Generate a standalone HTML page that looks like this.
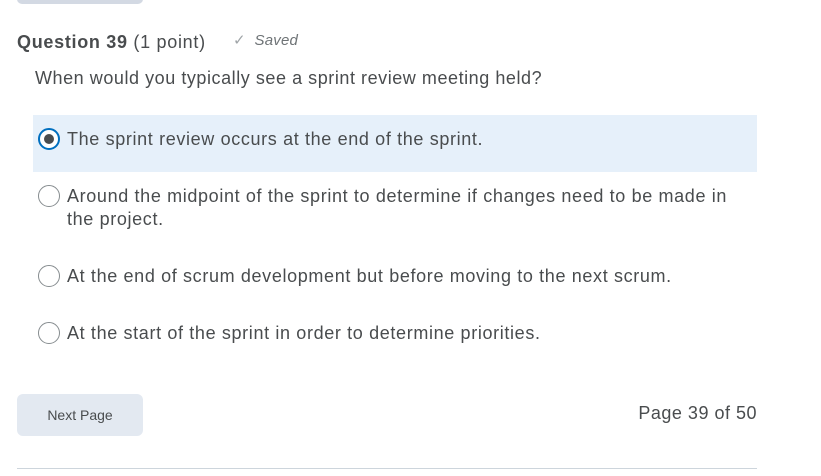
<!DOCTYPE html>
<html><head><style>
body{margin:0;width:821px;height:476px;background:#fff;font-family:"Liberation Sans",sans-serif;color:#494c4e;position:relative;overflow:hidden}
.a{position:absolute;white-space:nowrap}
.r{position:absolute;width:18px;height:18px;border:1px solid #868c8f;border-radius:50%;background:#fff;box-sizing:border-box}
.t{font-size:18px;line-height:23px;letter-spacing:0.64px}
</style></head><body>
<div class="a" style="left:17px;top:-6px;width:126px;height:10px;background:#d3d9e3;border-radius:5px"></div>
<div class="a" style="left:17px;top:30px;font-size:18px;line-height:24px;letter-spacing:0.7px"><b>Question 39</b> (1 point)</div>
<div class="a" style="left:233px;top:31px;font-size:15px;color:#6e7376;font-style:italic;letter-spacing:0.2px"><span style="color:#a0a5a8;font-style:normal;font-size:15px">✓</span>&nbsp; Saved</div>
<div class="a t" style="left:35px;top:67px;letter-spacing:0.55px">When would you typically see a sprint review meeting held?</div>
<div class="a" style="left:33px;top:115px;width:724px;height:57px;background:#e6f0fa"></div>
<div class="r" style="left:38px;top:128px;width:22px;height:22px;border:2px solid #006fbf"><div style="position:absolute;left:4px;top:4px;width:10px;height:10px;border-radius:50%;background:#494c4e"></div></div>
<div class="a t" style="left:67px;top:128px">The sprint review occurs at the end of the sprint.</div>
<div class="r" style="left:38px;top:185px;width:22px;height:22px"></div>
<div class="a t" style="left:67px;top:185px">Around the midpoint of the sprint to determine if changes need to be made in<br>the project.</div>
<div class="r" style="left:38px;top:265px;width:22px;height:22px"></div>
<div class="a t" style="left:67px;top:265px">At the end of scrum development but before moving to the next scrum.</div>
<div class="r" style="left:38px;top:322px;width:22px;height:22px"></div>
<div class="a t" style="left:67px;top:322px">At the start of the sprint in order to determine priorities.</div>
<div class="a" style="left:17px;top:394px;width:126px;height:42px;background:#e3e9f1;border-radius:6px;font-size:14px;line-height:42px;text-align:center;color:#494c4e">Next Page</div>
<div class="a t" style="right:64px;top:402px;letter-spacing:0.5px">Page 39 of 50</div>
<div class="a" style="left:17px;top:468px;width:740px;height:1px;background:#cdd5dc"></div>
</body></html>
